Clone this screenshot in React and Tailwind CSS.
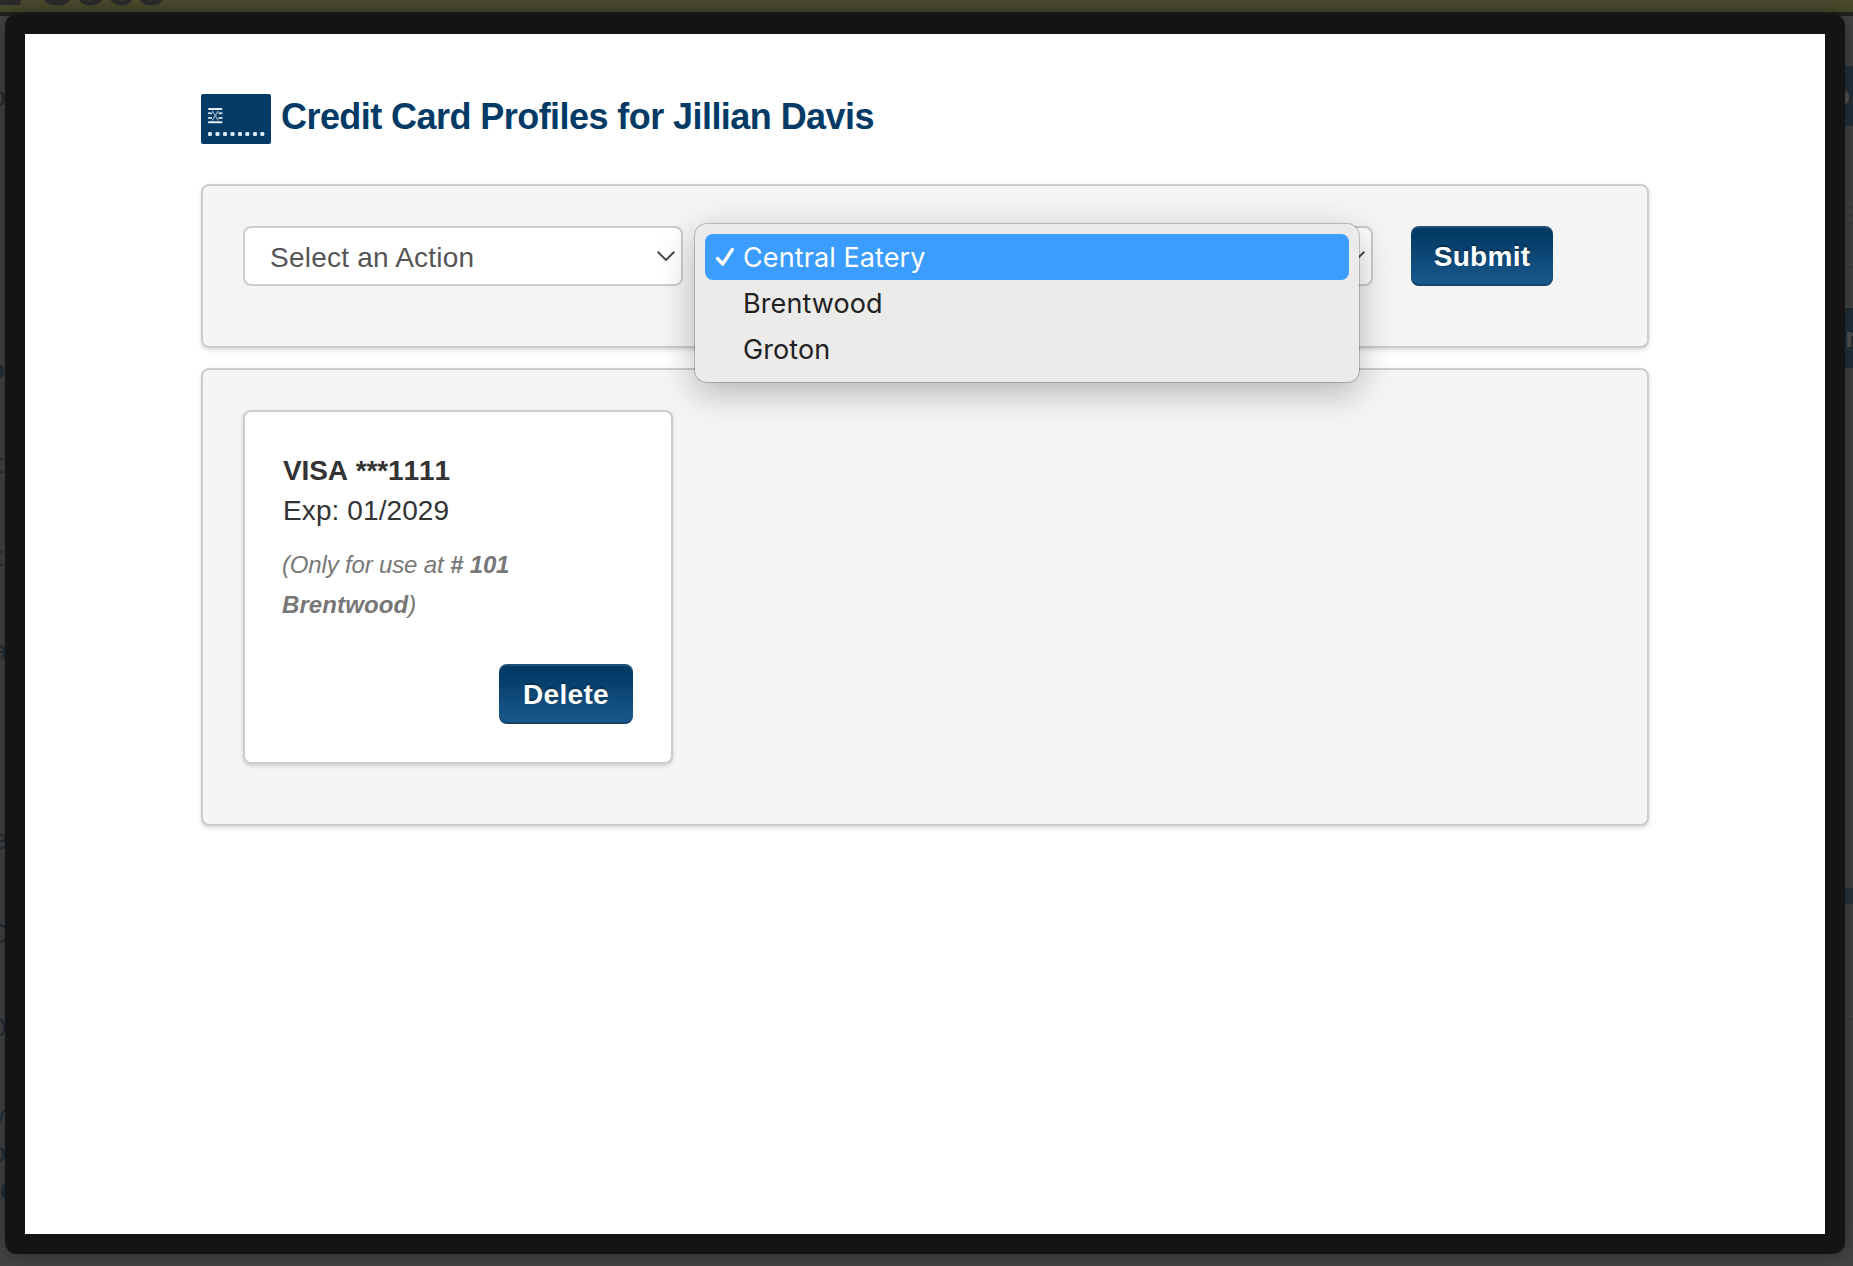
import React, { useState } from 'react';

const locations = ['Central Eatery', 'Brentwood', 'Groton'];

// Letters of the dimmed page that stick out left of the modal
const leftLetters = [
  { text: 'o', className: 'mt-[87px] w-[6px] text-[#2b2b2b]' },
  { text: 'o', className: 'mt-[253px] w-[5px] font-bold text-[#22303a]' },
  { text: 't', className: 'mt-[74px] w-[3px] text-[#22303a]' },
  { text: 't', className: 'mt-[73px] w-[3px] text-[#22303a]' },
  { text: 'a', className: 'mt-[74px] w-[7px] text-[#22303a]' },
  { text: 'e', className: 'mt-[169px] w-[8px] text-[#22303a]' },
  { text: 'C', className: 'mt-[74px] w-[9px] text-[#22303a]' },
  { text: 'O', className: 'mt-[74px] w-[7px] text-[#22303a]' },
  { text: 'y', className: 'mt-[68px] w-[5px] text-[#22303a]' },
  { text: 'o', className: 'mt-[17px] w-[6px] text-[#22303a]' },
  { text: 'C', className: 'mt-[19px] w-[20px] font-bold text-[#22303a]' },
];

const DimmedPage = () => {
  return (
    <div className="absolute inset-0 overflow-hidden bg-[#444444]">
      <div className="h-3 overflow-hidden bg-linear-to-b from-[#4b4b2e] to-[#47472b]">
        <div className="-mt-[45px] -ml-[12px] text-[52px] leading-[64px] font-bold whitespace-nowrap text-[#2b2b2b]">
          E Coco
        </div>
      </div>
      <div className="h-1 bg-[#222222]"></div>
      <div className="-mt-4 flex justify-between">
        <div className="flex w-[5px] flex-col items-start overflow-hidden">
          {leftLetters.map((letter, i) => (
            <div key={i} className={`flex h-5 shrink-0 justify-end text-[28px] leading-5 ${letter.className}`}>
              {letter.text}
            </div>
          ))}
        </div>
        <div className="w-2 overflow-hidden">
          <div className="mt-[66px] flex h-[60px] w-[5px] items-center justify-end bg-[#22303a] text-[28px] font-bold text-[#555555] shadow-[3px_0_0_#22303a]">
            o
          </div>
          <div className="mt-20 h-0.5 bg-[#3d3d3d]"></div>
          <div className="mt-1.5 h-0.5 bg-[#3d3d3d]"></div>
          <div className="mt-1.5 h-0.5 bg-[#3d3d3d]"></div>
          <div className="mt-[42px] h-0.5 bg-[#3d3d3d]"></div>
          <div className="mt-10 flex h-[60px] items-center bg-[#22303a] text-[28px] font-bold text-[#555555]">
            n
          </div>
          <div className="mt-[520px] h-4 bg-[#2a353e]"></div>
          <div className="mt-[114px] h-0.5 bg-[#3d3d3d]"></div>
        </div>
      </div>
    </div>
  );
};

const CardIcon = () => (
  <svg width="70" height="50" viewBox="0 0 70 50" className="shrink-0">
    <rect width="70" height="50" rx="2" fill="#033b66" />
    <g stroke="#c3d0dc" strokeLinecap="round" fill="none">
      <path d="M8 15h12.500M8 28.200h12.500" strokeWidth="2" stroke="#e6edf2" />
      <path d="M7.800 19.300h2.400M18.300 19.300h2.400M7.800 24h2.400M18.300 24h2.400" strokeWidth="2" />
      <path d="M11.500 17.300 17 26M17 17.300 11.500 26" strokeWidth="1.300" opacity="0.75" />
    </g>
    {[9, 16.5, 24, 31.5, 39, 46.3, 54, 61.3].map((x) => (
      <rect key={x} x={x - 2} y="38" width="4" height="4" rx="1.2" fill="#dfe7ee" />
    ))}
  </svg>
);

const Chevron = () => (
  <svg width="18" height="11" viewBox="0 0 18 11" fill="none" stroke="#444444" strokeWidth="1.9">
    <path d="M1.2 1.3 9 9l7.8-7.700" strokeLinecap="round" />
  </svg>
);

const Button = ({ children, className }) => (
  <button
    className={`h-[60px] rounded-[8px] bg-linear-to-b from-[#033b66] from-15% to-[#1a5a8e] pt-0.5 text-[28px] leading-none font-bold tracking-[0.3px] text-white shadow-[inset_0_2px_0_rgba(255,255,255,0.12),inset_0_-2px_0_rgba(0,0,0,0.25)] [text-shadow:0_-2px_1px_rgba(0,0,0,0.3)] ${className}`}
  >
    {children}
  </button>
);

const App = () => {
  const [selected, setSelected] = useState('Central Eatery');

  return (
    <div className="relative h-[1266px] w-[1853px] overflow-hidden font-['Liberation_Sans',Arial,sans-serif]">
      <DimmedPage />

      {/* Modal */}
      <div className="relative mt-[14px] ml-[5px] h-[1240px] w-[1840px] rounded-[12px] border-20 border-[#141414] bg-white px-44 pt-[60px] shadow-[0_0_20px_rgba(0,0,0,0.4)]">
        <div className="flex h-[50px] items-center">
          <CardIcon />
          <h1 className="ml-[10px] pb-1 text-[36px] leading-none font-bold tracking-[-0.56px] whitespace-nowrap text-[#033b66]">
            Credit Card Profiles for Jillian Davis
          </h1>
        </div>

        <div className="mt-10 flex h-[164px] items-start rounded-[8px] border-2 border-[#cccccc] bg-[#f5f5f5] px-10 pt-10 shadow-[0_2px_4px_rgba(0,0,0,0.15)]">
          <div className="flex h-[60px] w-[440px] items-center justify-between rounded-[8px] border-2 border-[#cccccc] bg-white pr-[6px] pl-[25px] text-[28px] text-[#555555]">
            <span className="pt-1 tracking-[0.22px]">Select an Action</span>
            <Chevron />
          </div>

          <div className="relative ml-[14px] flex h-[60px] w-[676px] items-center justify-end rounded-[8px] border-2 border-[#cccccc] bg-white pr-[6px]">
            <Chevron />
            <ul className="absolute -top-[4px] -left-1 z-10 h-[158px] w-[664px] rounded-[12px] bg-[#ebebea] px-[10px] pt-[10px] font-[Inter,sans-serif] text-[27px] tracking-[0.1px] text-[#222222] shadow-[0_0_0_1px_rgba(0,0,0,0.2),0_10px_36px_rgba(0,0,0,0.28)]">
              {locations.map((location) => (
                <li
                  key={location}
                  onClick={() => setSelected(location)}
                  className={`flex h-[46px] items-center rounded-[8px] pl-[10px] ${
                    location === selected ? 'bg-[#3b9dff] text-white' : ''
                  }`}
                >
                  <span className="w-7">
                    {location === selected && (
                      <svg width="20" height="20" viewBox="0 0 20 20" fill="none" stroke="white" strokeWidth="3.4">
                        <path d="M2.500 11.500 7.800 17 17.300 2.500" strokeLinecap="round" strokeLinejoin="round" />
                      </svg>
                    )}
                  </span>
                  <span className="pt-[3px]">{location}</span>
                </li>
              ))}
            </ul>
          </div>

          <Button className="ml-[38px] w-[142px]">Submit</Button>
        </div>

        <div className="mt-5 h-[458px] rounded-[8px] border-2 border-[#cccccc] bg-[#f5f5f5] p-10 shadow-[0_2px_4px_rgba(0,0,0,0.15)]">
          <div className="flex h-[354px] w-[430px] flex-col rounded-[8px] border-2 border-[#cccccc] bg-white p-[38px] pt-[39px] text-[28px] leading-10 text-[#333333] shadow-[0_2px_4px_rgba(0,0,0,0.15)]">
            <div className="font-bold tracking-[-0.1px] [font-kerning:none]">VISA ***1111</div>
            <div className="tracking-[0.1px]">Exp: 01/2029</div>
            <p className="-ml-px mt-[14px] w-[260px] text-[24px] tracking-[-0.16px] text-[#777777] italic">
              (Only for use at <b># 101</b> <b className="tracking-[0.1px]">Brentwood</b>)
            </p>
            <Button className="mt-auto w-[134px] self-end">Delete</Button>
          </div>
        </div>
      </div>
    </div>
  );
};

export default App;
